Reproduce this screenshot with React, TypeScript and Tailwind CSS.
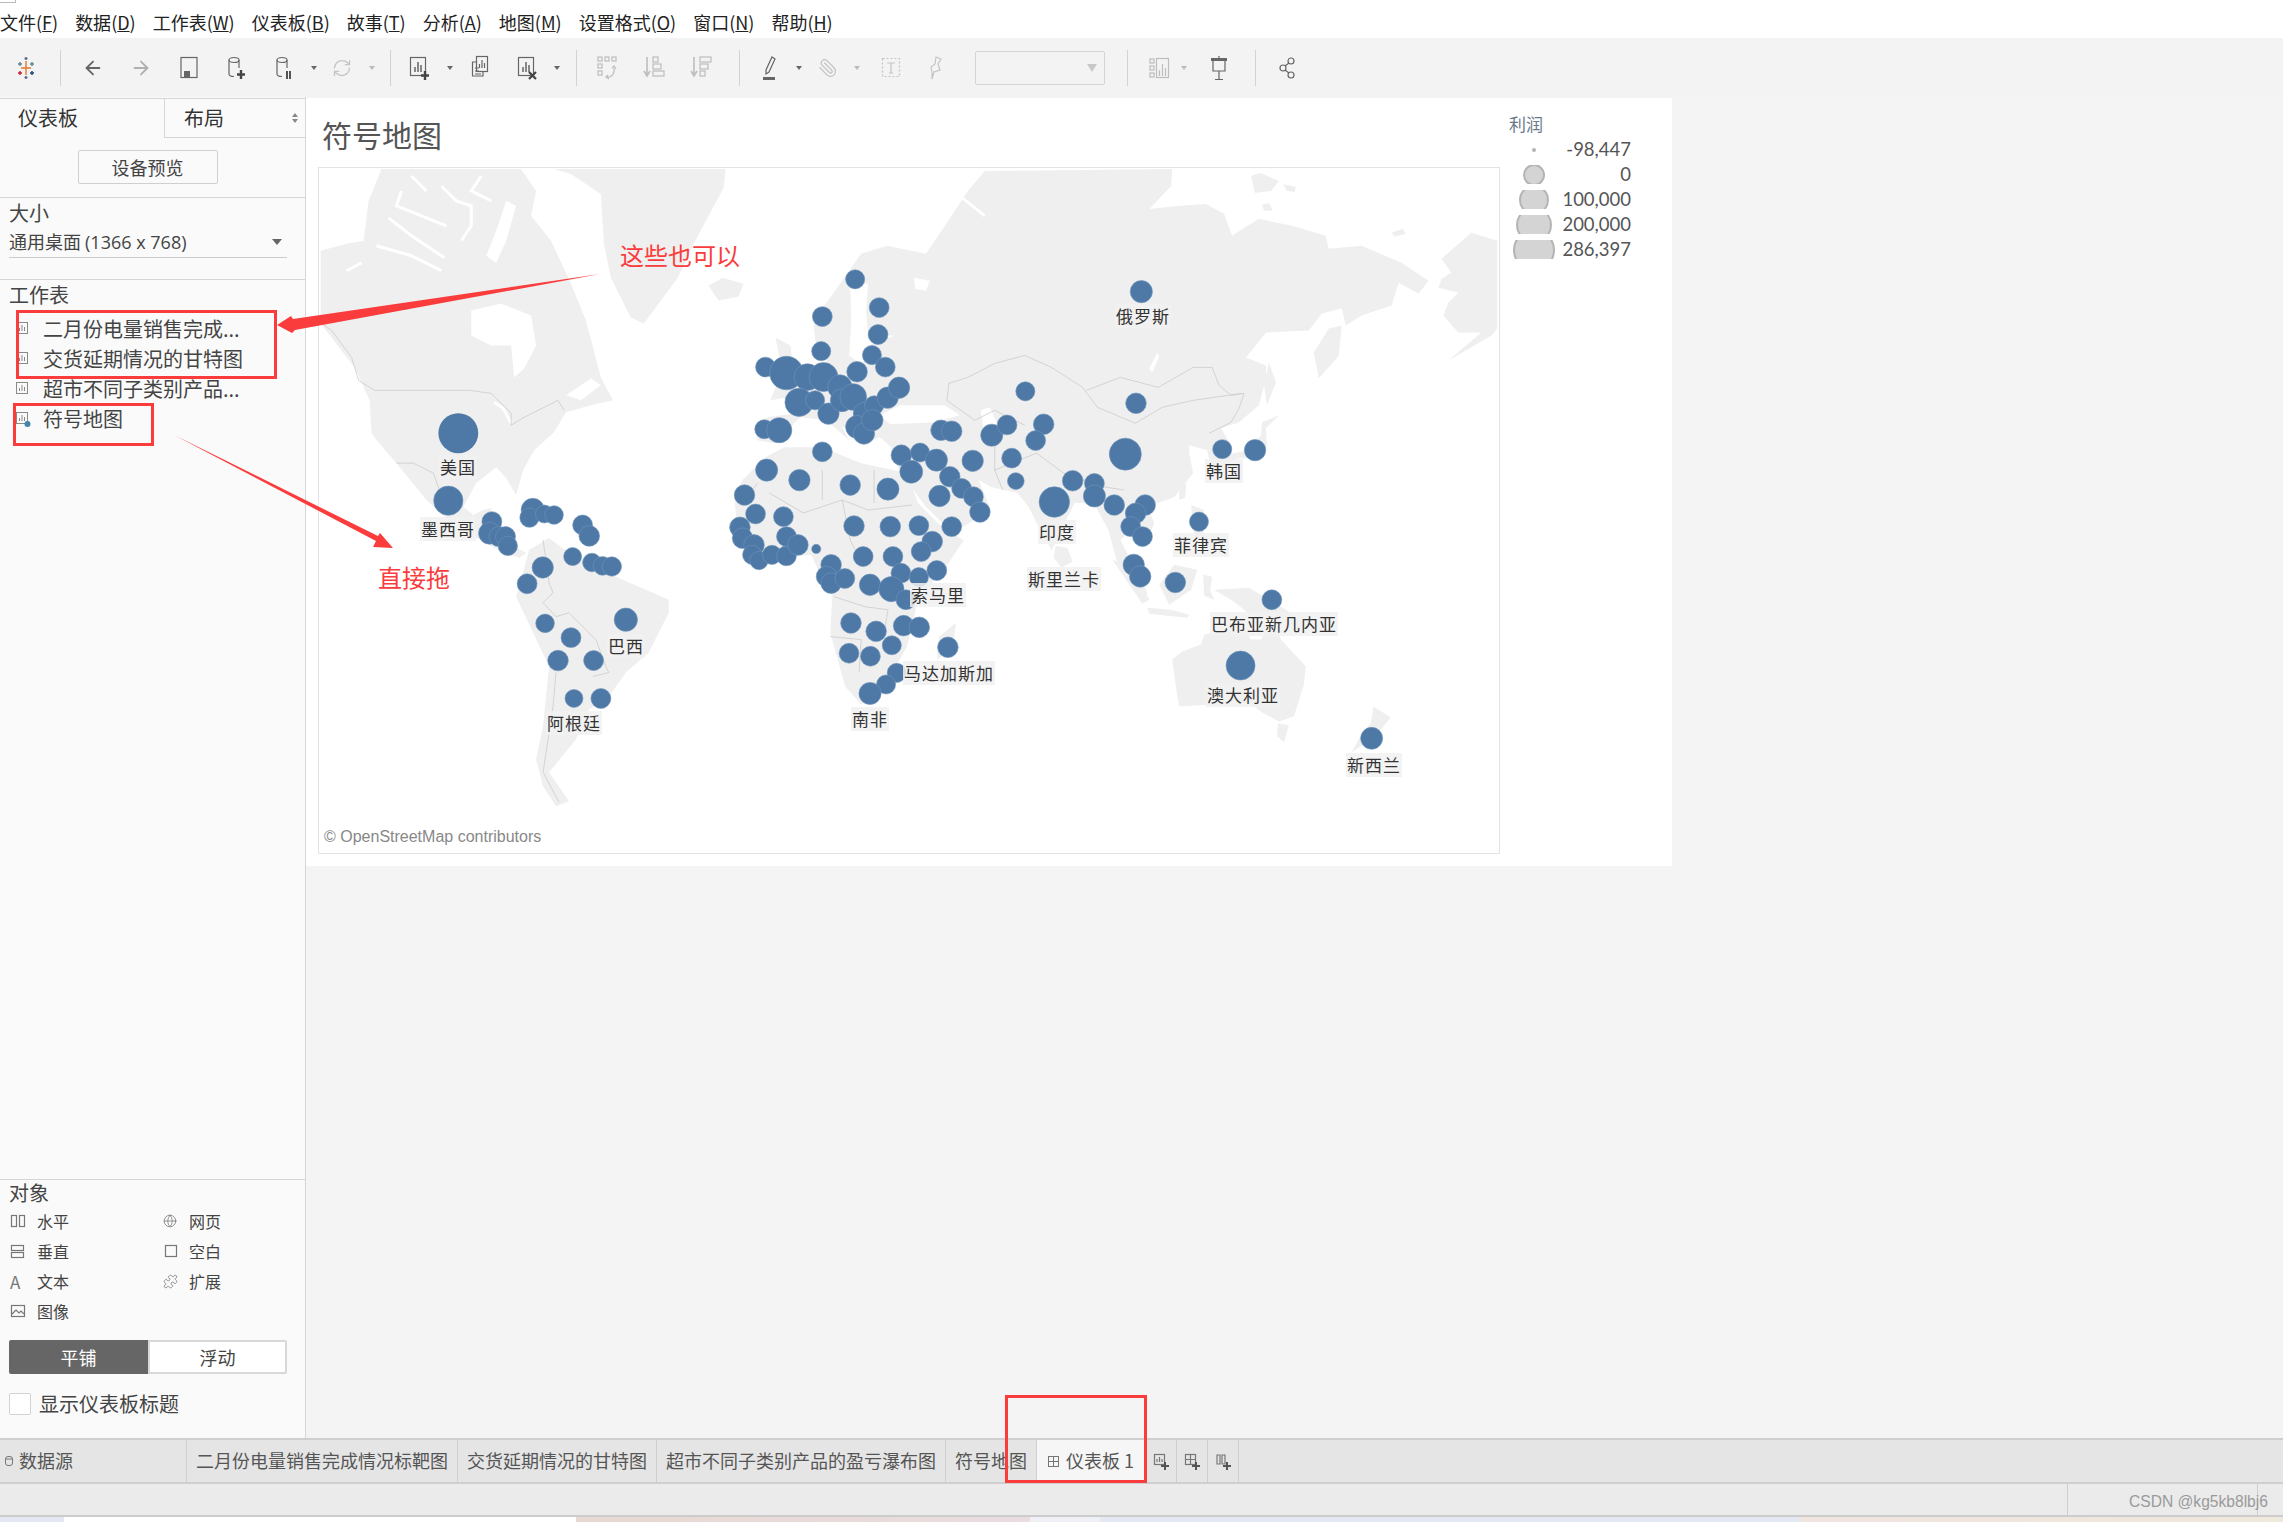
import React from 'react';
import { ArrowLeft, ArrowRight, Globe, Paperclip, Puzzle, RefreshCw } from 'lucide-react';

const RED = '#fa3c3c';

// circles read off the Europe/Africa/Asia crop: x * 1/2.613, y * 1/3
const oldWorld: number[][] = [
  [405,116,25],[468,201,26],[319,228,26],[465,282,26],[316,332,25],[449,344,25],[484,380,26],[170,380,26],[225,398,44],[280,410,35],
  [322,410,38],[410,394,27],[365,440,32],[258,486,37],[300,480,25],[335,520,28],[370,480,30],[400,470,35],[430,520,30],[455,495,25],
  [490,472,28],[520,442,28],[410,560,30],[428,580,28],[450,540,28],[167,567,25],[206,570,33],[319,635,26],[173,690,29],[259,720,28],
  [392,735,27],[491,747,29],[526,645,27],[575,637,25],[552,695,30],[618,660,29],[630,570,27],[658,573,27],[763,585,29],[803,554,26],
  [899,552,27],[878,601,26],[851,453,25],[1141,489,27],[1155,153,29],[1113,642,42],[1367,627,25],[1453,630,28],[713,662,28],[815,654,26],
  [826,723,22],[653,710,27],[626,768,28],[684,745,26],[715,770,26],[732,816,27],[975,722,27],[927,786,40],[1032,730,26],[1032,768,29],
  [1084,795,27],[1165,795,27],[1140,820,27],[1127,860,26],[1158,890,26],[1306,845,25],[1135,975,28],[1152,1010,28],[1244,1028,27],[1497,1080,26],
  [1415,1278,38],[115,765,27],[144,822,26],[217,830,26],[103,862,27],[110,895,27],[140,915,27],[135,945,25],[153,962,24],[187,945,25],
  [225,948,26],[225,890,26],[255,915,27],[303,927,12],[402,858,27],[497,860,27],[572,857,26],[658,860,26],[607,905,27],[578,935,26],
  [426,950,26],[504,950,26],[342,975,27],[330,1010,27],[342,1030,27],[378,1016,26],[444,1035,28],[525,1000,26],[572,1012,25],[619,992,26],
  [500,1048,33],[538,1080,26],[394,1150,27],[460,1175,27],[532,1158,27],[573,1163,27],[501,1217,25],[389,1241,26],[445,1250,26],[648,1223,27],
  [514,1300,25],[486,1335,25],[444,1362,29],
];

// americas crop: x / 3, y / 3
const americas: number[][] = [
  [396,182,44],[527,245,30],[520,280,33],[548,290,30],[568,290,30],[575,318,29],[650,210,35],[640,233,29],[685,222,27],[714,225,28],
  [800,255,30],[820,288,31],[770,350,27],[680,383,32],[633,432,30],[828,368,28],[860,378,28],[888,380,29],[930,540,35],[687,551,28],
  [765,594,30],[726,663,31],[833,663,30],[774,777,27],[855,777,30],
];

const land = [
  // north america
  '319,250 345,243 362,240 367,200 380,168 520,168 535,190 530,215 550,240 570,283 585,320 600,377 612,400 590,405 565,412 553,432 533,450 522,470 515,495 505,478 495,467 475,483 462,507 472,515 482,510 490,508 488,525 502,540 525,553 518,558 502,553 480,540 458,530 425,500 395,463 375,440 370,433 368,400 353,367 319,323',
  // greenland, iceland
  '553,168 725,168 723,187 693,243 677,277 643,323 630,317 610,277 603,243 600,193 570,173',
  '708,285 722,277 743,283 738,296 718,300',
  // south america
  '528,550 548,538 568,553 615,577 668,600 668,613 648,653 625,673 608,697 588,710 575,740 548,773 568,802 555,807 542,787 535,760 542,727 548,667 515,597 522,573',
  // africa
  '734,500 742,480 765,457 784,447 822,447 861,463 907,473 918,503 945,530 964,540 949,563 918,600 907,647 884,687 861,705 845,687 830,633 832,597 819,573 811,555 757,560 738,540',
  '956,623 953,650 937,660 939,637',
  // eurasia
  '755,427 767,417 796,413 803,403 786,397 800,387 826,373 826,357 815,340 813,320 830,297 861,253 887,245 926,253 945,225 968,190 985,170 1173,168 1172,185 1150,208 1177,205 1207,203 1225,213 1233,235 1260,218 1293,225 1327,235 1330,248 1363,245 1403,262 1430,280 1420,293 1400,282 1393,305 1363,315 1347,325 1343,308 1323,313 1310,330 1267,332 1247,357 1267,365 1267,378 1260,405 1240,422 1222,428 1232,445 1230,470 1215,478 1208,450 1190,445 1190,453 1194,473 1175,497 1148,507 1155,523 1148,540 1132,530 1121,540 1148,593 1142,598 1117,560 1109,530 1094,503 1075,503 1052,550 1037,523 1029,507 1018,493 991,487 979,480 991,510 953,533 926,507 899,470 891,447 880,437 865,443 863,430 842,427 849,440 826,420 800,417 773,443 757,440',
  // kamchatka, sakhalin, japan
  '1343,325 1340,355 1320,378 1315,352 1330,328',
  '1270,362 1277,382 1268,405 1265,385',
  '1263,422 1280,415 1270,425 1267,428 1268,445 1263,458 1240,458 1222,463 1224,455 1250,450 1262,435',
  // alaska
  '1443,258 1473,232 1499,240 1499,328 1493,335 1450,360 1483,332 1460,332 1445,315 1450,302 1460,292 1440,287 1443,278 1453,272',
  // arctic islands
  '1252,175 1262,172 1280,180 1272,190 1256,192',
  '1284,183 1297,186 1296,191 1288,190',
  '1393,232 1404,228 1407,233 1396,236',
  '1263,204 1270,202 1274,210 1265,210',
  // british isles, sri lanka, islands of the south east
  '775,337 790,345 795,385 800,395 770,400 782,370',
  '1056,546 1068,548 1073,562 1062,568 1054,558',
  '1113,560 1135,568 1150,600 1143,604',
  '1160,585 1175,565 1198,570 1192,590 1170,605',
  '1148,608 1172,610 1190,615 1188,618 1150,614',
  '1204,575 1213,577 1211,590 1215,600 1205,596',
  '1215,590 1250,588 1290,612 1305,628 1280,622 1255,618 1235,602',
  '1192,505 1205,510 1203,530 1215,545 1210,552 1195,535',
  '1180,487 1187,483 1186,498 1180,500',
  // australia, tasmania, new zealand
  '1173,660 1183,652 1202,645 1205,635 1225,630 1245,630 1252,640 1262,640 1275,620 1282,640 1307,667 1305,685 1295,717 1280,722 1263,713 1250,703 1215,705 1180,707 1177,690',
  '1279,724 1290,726 1285,743 1278,737',
  '1375,707 1392,718 1377,737 1353,753 1361,738 1372,724',
];

const water = [
  // hudson bay, james bay, st lawrence, baffin channel
  '470,310 500,303 530,315 535,345 523,368 513,377 510,345 490,345 470,335',
  '565,395 590,378 600,385 580,400',
  '505,200 515,205 505,240 495,262 485,255 495,230',
  '395,463 412,505 420,520 403,490',
  // black sea, caspian, baltic, white sea
  '880,415 900,405 945,405 960,415 935,422 890,424',
  '981,410 990,407 998,425 996,440 985,438',
  '850,283 868,283 866,310 868,335 895,335 868,345 862,365 849,355 851,320',
  '914,277 930,280 926,290 915,288',
  // baikal
  '1150,368 1158,352 1160,356 1153,372',
];

// arctic channels, great lakes: thin white cuts through the land
const channels = [
  '387,217 410,235 443,257',
  '400,190 395,205 420,215 445,225',
  '440,185 455,200 470,205 470,225 460,240',
  '480,175 470,190 490,200',
  '410,175 425,190',
  '375,245 410,255 440,270',
  '493,402 502,408 510,423',
  '345,270 360,262',
  '960,195 985,215',
];

const borders = [
  '320,323 330,330 350,357 357,380 373,390 468,390 490,393 510,413 510,425 523,417 557,400 563,410',
  '395,463 412,463 432,473 438,490',
  '542,540 548,583 552,593 542,603 555,617 568,613 585,630 595,640 605,667 608,673 592,677',
  '555,673 552,707 542,773 558,803',
  '769,493 803,513 842,500 868,510 912,505',
  '874,470 874,503',
  '822,470 822,500',
  '745,500 757,483',
  '834,597 865,607 888,610 884,633',
  '830,637 861,640 859,673',
  '842,500 850,540 860,560',
  '949,383 968,377 995,363 1025,355 1052,367 1083,387 1098,407 1136,423 1163,407 1194,400 1243,393',
  '949,383 947,400 975,420 995,410 1025,425',
  '1087,390 1121,377 1159,387 1194,367 1213,367 1220,385 1232,395 1245,393 1240,408 1232,422 1210,433',
  '995,470 1037,453 1064,473 1106,487 1125,490',
  '995,440 995,470 1003,490',
];

const labels: [string, number, number][] = [
  ['美国', 457, 466], ['墨西哥', 447, 528], ['巴西', 625, 645], ['阿根廷', 573, 722], ['俄罗斯', 1142, 315],
  ['韩国', 1223, 470], ['菲律宾', 1200, 544], ['印度', 1056, 531], ['斯里兰卡', 1063, 578], ['索马里', 937, 594],
  ['巴布亚新几内亚', 1273, 623], ['马达加斯加', 948, 672], ['澳大利亚', 1242, 694], ['南非', 869, 718], ['新西兰', 1373, 764],
];

const WorldMap = () => (
  <svg viewBox="318 167 1182 687" className="absolute inset-0 w-full h-full">
    {land.map((p, i) => <polygon key={i} points={p} fill="#efefef" />)}
    {water.map((p, i) => <polygon key={i} points={p} fill="#ffffff" />)}
    {channels.map((p, i) => <polyline key={i} points={p} fill="none" stroke="#ffffff" strokeWidth="3" />)}
    {borders.map((p, i) => <polyline key={i} points={p} fill="none" stroke="#cccccc" strokeWidth="0.8" />)}
    <circle cx="457" cy="433" r="20" fill="#4e79a7" />
    {americas.map(([x, y, r], i) => (
      <circle key={i} cx={315 + x / 3} cy={440 + y / 3} r={r / 3} fill="#4e79a7" stroke="#6f93b9" strokeWidth="0.6" />
    ))}
    {oldWorld.map(([x, y, r], i) => (
      <circle key={i} cx={700 + x / 2.613} cy={240 + y / 3} r={r / 2.613} fill="#4e79a7" stroke="#6f93b9" strokeWidth="0.6" />
    ))}
    <circle cx="1373" cy="739" r="11" fill="#4e79a7" stroke="#6f93b9" strokeWidth="0.6" />
  </svg>
);

const Ico = ({ w = 24, h = 28, c = '#666666', children }: { w?: number; h?: number; c?: string; children: React.ReactNode }) => (
  <svg width={w} height={h} viewBox={`0 0 ${w} ${h}`} fill="none" stroke={c} strokeWidth="1.2">{children}</svg>
);

const Slot = ({ className, children }: { className: string; children?: React.ReactNode }) => (
  <div className={`flex items-center justify-center shrink-0 ${className}`}>{children}</div>
);

const Caret = ({ c = '#666666' }: { c?: string }) => (
  <svg width="6" height="4" viewBox="0 0 6 4"><path d="M0 0h6L3 4z" fill={c} /></svg>
);

const Sep = ({ className }: { className: string }) => <div className={`w-px h-[36px] bg-[#d2d2d2] shrink-0 ${className}`} />;

const Logo = () => (
  <svg width="20" height="22" viewBox="0 0 20 22" strokeWidth="1.4">
    <path d="M10 4v14M5 11h10" stroke="#e8762c" />
    <path d="M4 5v4M2 7h4M16 5v4M14 7h4" stroke="#5b879b" />
    <path d="M4 14v4M2 16h4" stroke="#c72035" />
    <path d="M16 14v4M14 16h4" stroke="#1f447e" />
    <path d="M10 0v3M8.5 1.5h3M10 19v3M8.5 20.500h3" stroke="#5b6591" />
  </svg>
);

const SheetBox = ({ c = '#666666' }: { c?: string }) => (
  <>
    <rect x="2.500" y="3.500" width="15" height="18" stroke={c} />
    <path d="M7 18v-5M10 18V8M13 18v-7" stroke={c} strokeWidth="1.500" />
  </>
);

const Cyl = ({ c = '#666666' }: { c?: string }) => (
  <>
    <ellipse cx="9" cy="6" rx="5" ry="2.500" stroke={c} />
    <path d="M4 6v14c0 1.500 2 2.500 5 2.500M14 6v8" stroke={c} />
  </>
);

const Toolbar = () => (
  <div className="flex items-center h-[59px] bg-[#f3f3f3]">
    <Slot className="w-[52px]"><Logo /></Slot>
    <Sep className="ml-[8px]" />
    <Slot className="w-[48px] ml-[8px]"><ArrowLeft size={22} color="#666666" strokeWidth={2} /></Slot>
    <Slot className="w-[48px]"><ArrowRight size={22} color="#b0b0b0" strokeWidth={2} /></Slot>
    <Slot className="w-[48px]">
      <Ico><rect x="4" y="3.500" width="16" height="20" /><rect x="7" y="17" width="6" height="6" fill="#666666" stroke="none" /></Ico>
    </Slot>
    <Slot className="w-[48px]">
      <Ico><Cyl /><path d="M16 16v9M12 20.500h8" strokeWidth="2.400" stroke="#444444" /></Ico>
    </Slot>
    <Slot className="w-[48px]">
      <Ico><Cyl /><path d="M14 17v8M17 17v8" strokeWidth="1.800" stroke="#444444" /></Ico>
    </Slot>
    <Slot className="w-[9px]"><Caret /></Slot>
    <Slot className="w-[48px]"><RefreshCw size={20} color="#c4c4c4" strokeWidth={1.500} /></Slot>
    <Slot className="w-[12px]"><Caret c="#bbbbbb" /></Slot>
    <Sep className="ml-[12px]" />
    <Slot className="w-[48px] ml-[5px]">
      <Ico><SheetBox /><path d="M17 17v9M13 21.500h8" strokeWidth="2.400" stroke="#444444" /></Ico>
    </Slot>
    <Slot className="w-[12px]"><Caret /></Slot>
    <Slot className="w-[48px]">
      <Ico>
        <rect x="8.500" y="2.500" width="11" height="15" />
        <path d="M11.500 14v-4M14 14V6M16.500 14v-5" />
        <path d="M8 8H4.500v14H15v-4" />
        <path d="M7 14h4M7 17h4M7 20h6" />
      </Ico>
    </Slot>
    <Slot className="w-[48px]">
      <Ico><SheetBox /><path d="M13 18l7 7M20 18l-7 7" strokeWidth="2.200" stroke="#444444" /></Ico>
    </Slot>
    <Slot className="w-[10px]"><Caret /></Slot>
    <Sep className="ml-[14px]" />
    <Slot className="w-[48px] ml-[6px]">
      <Ico c="#bdbdbd">
        <rect x="3" y="3" width="4" height="4" /><rect x="10" y="3" width="4" height="4" /><rect x="17" y="3" width="4" height="4" />
        <rect x="3" y="10" width="4" height="4" /><rect x="3" y="17" width="4" height="4" />
        <path d="M11 23c5 1 9-3 8-9M17 14l2-2 2 3M13 21l-2 2 3 2" />
      </Ico>
    </Slot>
    <Slot className="w-[45px]">
      <Ico c="#bdbdbd">
        <path d="M5 3v17M2 17l3 5 3-5" strokeWidth="1.600" />
        <rect x="11" y="3" width="5" height="5" /><rect x="11" y="10" width="8" height="5" /><rect x="11" y="17" width="11" height="5" />
      </Ico>
    </Slot>
    <Slot className="w-[48px] ml-[1px]">
      <Ico c="#bdbdbd">
        <path d="M5 3v17M2 17l3 5 3-5" strokeWidth="1.600" />
        <rect x="11" y="3" width="11" height="5" /><rect x="11" y="10" width="8" height="5" /><rect x="11" y="17" width="5" height="5" />
      </Ico>
    </Slot>
    <Sep className="ml-[14px]" />
    <Slot className="w-[48px] ml-[5px]">
      <Ico>
        <path d="M15 3l3 2-6 13-3 2 0-4z" />
        <rect x="6" y="23" width="12" height="3" fill="#666666" stroke="none" />
      </Ico>
    </Slot>
    <Slot className="w-[11px]"><Caret /></Slot>
    <Slot className="w-[48px]"><Paperclip size={20} color="#c4c4c4" strokeWidth={1.500} className="-scale-x-100" /></Slot>
    <Slot className="w-[9px]"><Caret c="#bbbbbb" /></Slot>
    <Slot className="w-[48px] ml-[6px]">
      <Ico c="#c4c4c4">
        <rect x="3.500" y="4.500" width="17" height="18" strokeDasharray="2 2" />
        <path d="M8 9h8M12 9v10M10 19h4" />
      </Ico>
    </Slot>
    <Slot className="w-[18px] ml-[12px]">
      <Ico w={14} h={26} c="#c4c4c4"><path d="M7 2l5 2-3 5 2 6-6 2-2 7 0-7-1-5 4-3z" /></Ico>
    </Slot>
    <div className="ml-[30px] w-[130px] h-[34px] shrink-0 border border-[#d4d4d4] rounded-[2px] flex items-center justify-end pr-[7px]">
      <svg width="10" height="8" viewBox="0 0 10 8"><path d="M0 0h10L5 8z" fill="#c8c8c8" /></svg>
    </div>
    <Sep className="ml-[22px]" />
    <Slot className="w-[40px] ml-[12px]">
      <Ico c="#bdbdbd">
        <rect x="2" y="5" width="4" height="4" /><rect x="2" y="12" width="4" height="4" /><rect x="2" y="19" width="4" height="4" />
        <rect x="8.500" y="4.500" width="12" height="19" />
        <path d="M11.500 22v-6M14.500 22V10M17.500 22v-8" />
      </Ico>
    </Slot>
    <Slot className="w-[8px]"><Caret c="#bbbbbb" /></Slot>
    <Slot className="w-[48px] ml-[7px]">
      <Ico>
        <rect x="4" y="4" width="16" height="3" fill="#666666" stroke="none" />
        <path d="M6 7v10h12V7M12 17v8M8 25.500h8M12 2v2" />
      </Ico>
    </Slot>
    <Sep className="ml-[12px]" />
    <Slot className="w-[48px] ml-[7px]">
      <Ico>
        <circle cx="8" cy="14" r="3" /><circle cx="16" cy="7" r="3" /><circle cx="16" cy="21" r="3" />
        <path d="M10 12l4-3M10 16l4 3" />
      </Ico>
    </Slot>
  </div>
);

const menus: [string, string][] = [
  ['文件', 'F'], ['数据', 'D'], ['工作表', 'W'], ['仪表板', 'B'], ['故事', 'T'],
  ['分析', 'A'], ['地图', 'M'], ['设置格式', 'O'], ['窗口', 'N'], ['帮助', 'H'],
];

const SheetIcon = ({ active }: { active?: boolean }) => (
  <svg width="16" height="18" viewBox="0 0 16 18" fill="none" stroke="#8a8a8a" className="shrink-0">
    <rect x="1.500" y="2.500" width="11" height="11" />
    <path d="M4.500 11V8M7 11V5M9.500 11V7" />
    {active && <circle cx="12.500" cy="14" r="3" fill="#3f86a8" stroke="none" />}
  </svg>
);

const sheets = [
  { name: '二月份电量销售完成...' },
  { name: '交货延期情况的甘特图' },
  { name: '超市不同子类别产品...' },
  { name: '符号地图', active: true },
];

const objectIcons: Record<string, React.ReactNode> = {
  水平: <Ico w={16} h={16} c="#777777"><rect x="1.500" y="2.500" width="5" height="11" /><rect x="9.500" y="2.500" width="5" height="11" /></Ico>,
  垂直: <Ico w={16} h={16} c="#777777"><rect x="1.500" y="2.500" width="12" height="5" /><rect x="1.500" y="9.500" width="12" height="5" /></Ico>,
  文本: <span className="text-[17px] leading-none text-[#777777]">A</span>,
  图像: <Ico w={16} h={16} c="#777777"><rect x="1.500" y="2.500" width="13" height="11" /><path d="M2 11l4-4 3 3 2-2 3 3" /></Ico>,
  网页: <Globe size={14} color="#777777" strokeWidth={1.300} />,
  空白: <Ico w={16} h={16} c="#777777"><rect x="2.500" y="2.500" width="11" height="11" /></Ico>,
  扩展: <Puzzle size={15} color="#777777" strokeWidth={1.300} />,
};

const objects = [['水平', '网页'], ['垂直', '空白'], ['文本', '扩展'], ['图像', '']];

const Sidebar = () => (
  <div className="w-[306px] shrink-0 border-r border-[#d6d6d6] bg-[#fafafa] flex flex-col text-[#444444]">
    <div className="flex h-[40px] border-t border-[#d6d6d6] mt-px">
      <div className="w-[164px] pl-[18px] text-[20px] leading-[38px] text-[#333333]">仪表板</div>
      <div className="flex-1 flex items-center justify-between pl-[19px] pr-[7px] border-l border-b border-[#d6d6d6] text-[20px] text-[#333333]">
        布局
        <svg width="6" height="10" viewBox="0 0 6 10"><path d="M3 0l3 4H0zM3 10L0 6h6z" fill="#888888" /></svg>
      </div>
    </div>
    <div className="h-[60px] flex items-start justify-center pt-[12px] pr-[10px] border-b border-[#d6d6d6]">
      <div className="w-[140px] h-[34px] border border-[#d0d0d0] rounded-[2px] flex items-center justify-center text-[18px]">设备预览</div>
    </div>
    <div className="h-[82px] px-[9px] border-b border-[#d6d6d6]">
      <div className="text-[20px] leading-[30px]">大小</div>
      <div className="w-[278px] h-[30px] pb-[2px] border-b border-[#cccccc] flex items-center justify-between pr-[5px] text-[18px]">
        <span>通用桌面 <span className="font-['Open_Sans',sans-serif]">(1366 x 768)</span></span>
        <svg width="10" height="6" viewBox="0 0 10 6"><path d="M0 0h10L5 6z" fill="#666666" /></svg>
      </div>
    </div>
    <div className="flex-1">
      <div className="px-[9px] text-[20px] leading-[30px]">工作表</div>
      <div className="mt-[4px] pl-[15px]">
        {sheets.map((s) => (
          <div key={s.name} className="h-[30px] flex items-center gap-[12px] text-[20px] leading-none whitespace-nowrap">
            <SheetIcon active={s.active} />
            {s.name}
          </div>
        ))}
      </div>
    </div>
    <div className="h-[259px] px-[9px] border-t border-[#d6d6d6] text-[#444444]">
      <div className="text-[20px] leading-[26px]">对象</div>
      <div className="grid grid-cols-[152px_1fr]">
        {objects.flat().map((o, i) => (
          <div key={i} className="h-[30px] flex items-center text-[16px]">
            {o && <span className={`w-[28px] flex justify-start ${i % 2 ? 'pl-[2px]' : 'pl-[1px]'}`}>{objectIcons[o]}</span>}
            {o}
          </div>
        ))}
      </div>
      <div className="flex w-[278px] h-[34px] mt-[14px] text-[18px]">
        <div className="w-[139px] bg-[#666666] text-white flex items-center justify-center rounded-l-[2px]">平铺</div>
        <div className="flex-1 bg-white border-2 border-[#d8d8d8] flex items-center justify-center rounded-r-[2px]">浮动</div>
      </div>
      <div className="flex items-center gap-[8px] mt-[15px] text-[20px]">
        <div className="w-[22px] h-[22px] bg-white border border-[#d4d4d4] rounded-[2px]" />
        显示仪表板标题
      </div>
    </div>
  </div>
);

const legendRows = [
  { v: '-98,447', w: 4 },
  { v: '0', w: 22 },
  { v: '100,000', w: 30 },
  { v: '200,000', w: 36 },
  { v: '286,397', w: 42 },
];

const Legend = () => (
  <div className="w-[172px] pt-[16px] pl-[9px]">
    <div className="text-[17px] leading-[20px] text-[#6a7a8c]">利润</div>
    <div className="w-[122px] mt-[3px]">
      {legendRows.map((r) => (
        <div key={r.v} className="h-[25px] flex items-center">
          <div className="w-[50px] h-[19px] overflow-hidden flex items-center justify-center shrink-0">
            <div
              className="shrink-0 rounded-full bg-[#d4d4d4] border-2 border-[#b4b4b4]"
              style={{ width: r.w, height: r.w, borderWidth: r.w < 10 ? 0 : 2, backgroundColor: r.w < 10 ? '#b4b4b4' : undefined }}
            />
          </div>
          <div className="flex-1 text-right text-[18.500px] text-[#555555] font-['Lato',sans-serif]">{r.v}</div>
        </div>
      ))}
    </div>
  </div>
);

const tabs = [
  { name: '二月份电量销售完成情况标靶图', w: 'w-[271px]' },
  { name: '交货延期情况的甘特图', w: 'w-[199px]' },
  { name: '超市不同子类别产品的盈亏瀑布图', w: 'w-[289px]' },
  { name: '符号地图', w: 'w-[91px]' },
];

const NewTab = ({ kind }: { kind: number }) => (
  <div className="w-[31px] h-full flex items-center justify-center border-r border-[#cfcfcf]">
    <Ico w={18} h={20} c="#777777">
      {kind === 0 && <><rect x="2.500" y="3.500" width="10" height="10" /><path d="M5 11V8M7.500 11V6M10 11V8" /></>}
      {kind === 1 && <><rect x="2.500" y="3.500" width="10" height="10" /><path d="M7.500 3.500v10M2.500 8.500h10" /></>}
      {kind === 2 && <><path d="M3 4v9h3V4zM8 4v9h3V4z" /></>}
      <path d="M13 11v8M9 15h8" strokeWidth="2" stroke="#555555" />
    </Ico>
  </div>
);

const TabBar = () => (
  <div className="h-[46px] shrink-0 flex bg-[#e5e5e5] border-y-2 border-[#cfcfcf] text-[18px] leading-[38px] text-[#555555] whitespace-nowrap">
    <div className="w-[187px] flex items-center gap-[6px] pl-[5px] border-r border-[#cfcfcf]">
      <svg width="8" height="10" viewBox="0 0 8 10" fill="none" stroke="#777777"><rect x="0.500" y="0.500" width="7" height="9" rx="2.500" /><path d="M0.500 3h7" /></svg>
      <span className="pb-[2px]">数据源</span>
    </div>
    {tabs.map((t) => (
      <div key={t.name} className={`${t.w} flex items-center justify-center border-r border-[#cfcfcf] pb-[2px]`}>{t.name}</div>
    ))}
    <div className="w-[109px] flex items-center gap-[7px] pl-[11px] bg-[#f6f6f6]">
      <svg width="11" height="11" viewBox="0 0 11 11" fill="none" stroke="#777777"><rect x="0.500" y="0.500" width="10" height="10" /><path d="M5.500 0.500v10M0.500 5.500h10" /></svg>
      <span className="pb-[2px]">仪表板 1</span>
    </div>
    <NewTab kind={0} />
    <NewTab kind={1} />
    <NewTab kind={2} />
  </div>
);

const RedBox = ({ className }: { className: string }) => (
  <div className={`absolute border-[3px] border-[#fa3c3c] ${className}`} />
);

export default function App() {
  return (
    <div className="relative w-[2283px] h-[1522px] overflow-hidden flex flex-col bg-white font-['Noto_Sans_CJK_SC','Liberation_Sans',sans-serif]">
      <div className="absolute top-0 left-0 w-[16px] h-[3px] border-r border-b border-[#bbbbbb]" />
      <div className="h-[38px] shrink-0 flex items-center gap-[17px] text-[18px] text-[#222222] whitespace-nowrap pt-[6px]">
        {menus.map(([t, k]) => (
          <span key={t}>{t}(<span className="underline">{k}</span>)</span>
        ))}
      </div>
      <Toolbar />
      <div className="flex-1 min-h-0 flex">
        <Sidebar />
        <div className="flex-1 bg-[#f4f4f4] pt-px">
          <div className="w-[1366px] h-[768px] bg-white flex">
            <div className="w-[1194px] pl-[12px] shrink-0">
              <div className="h-[69px] pl-[4px] pt-[4px] flex items-center text-[30px] text-[#555555]">符号地图</div>
              <div className="relative w-[1182px] h-[687px] border border-[#e3e3e3] overflow-hidden">
                <WorldMap />
                {labels.map(([t, x, y]) => (
                  <span
                    key={t}
                    className="absolute -translate-x-1/2 -translate-y-1/2 bg-[#f1f1f1]/85 px-px text-[17px] leading-[24px] tracking-[1px] text-[#333333] whitespace-nowrap"
                    style={{ left: x - 318, top: y - 167 }}
                  >
                    {t}
                  </span>
                ))}
                <span className="absolute left-[5px] bottom-[4px] text-[16px] text-[#888888] font-['Liberation_Sans',sans-serif]">© OpenStreetMap contributors</span>
              </div>
            </div>
            <Legend />
          </div>
        </div>
      </div>
      <TabBar />
      <div className="h-[31px] shrink-0 bg-[#ebebeb] flex justify-end">
        <div className="w-[190px] border-l border-[#cfcfcf]" />
        <div className="w-[26px] border-l border-[#cfcfcf]" />
      </div>
      <div className="h-[7px] shrink-0 flex border-t-2 border-[#cccccc]">
        <div className="w-[64px] bg-[#e4e7f2]" />
        <div className="w-[512px] bg-white" />
        <div className="w-[454px] bg-gradient-to-r from-[#e8d8d2] to-[#e9dde0]" />
        <div className="w-[70px] bg-[#eef0f6]" />
        <div className="w-[700px] bg-[#e3e8f2]" />
        <div className="flex-1 bg-gradient-to-r from-[#f0e4e0] to-[#efe8dc]" />
      </div>

      {/* annotations drawn on top of the screenshot */}
      <RedBox className="left-[16px] top-[310px] w-[261px] h-[69px]" />
      <RedBox className="left-[13px] top-[403px] w-[141px] h-[43px]" />
      <RedBox className="left-[1005px] top-[1395px] w-[142px] h-[88px]" />
      <svg className="absolute left-0 top-0 pointer-events-none" width="700" height="600" viewBox="0 0 700 600">
        <polygon points="600,274 293,319 291,316 277,325 292,333 295,330" fill={RED} />
        <polygon points="174,435 378,536 380,533 393,548 373,547 376,541" fill={RED} />
      </svg>
      <span className="absolute left-[620px] top-[237px] text-[24px] leading-[36px] text-[#fa3c3c]">这些也可以</span>
      <span className="absolute left-[378px] top-[559px] text-[24px] leading-[36px] text-[#fa3c3c]">直接拖</span>
      <span className="absolute left-[2129px] top-[1492px] text-[15.600px] leading-[20px] text-[#9a9a9a] font-['Liberation_Sans',sans-serif]">CSDN @kg5kb8lbj6</span>
    </div>
  );
}
